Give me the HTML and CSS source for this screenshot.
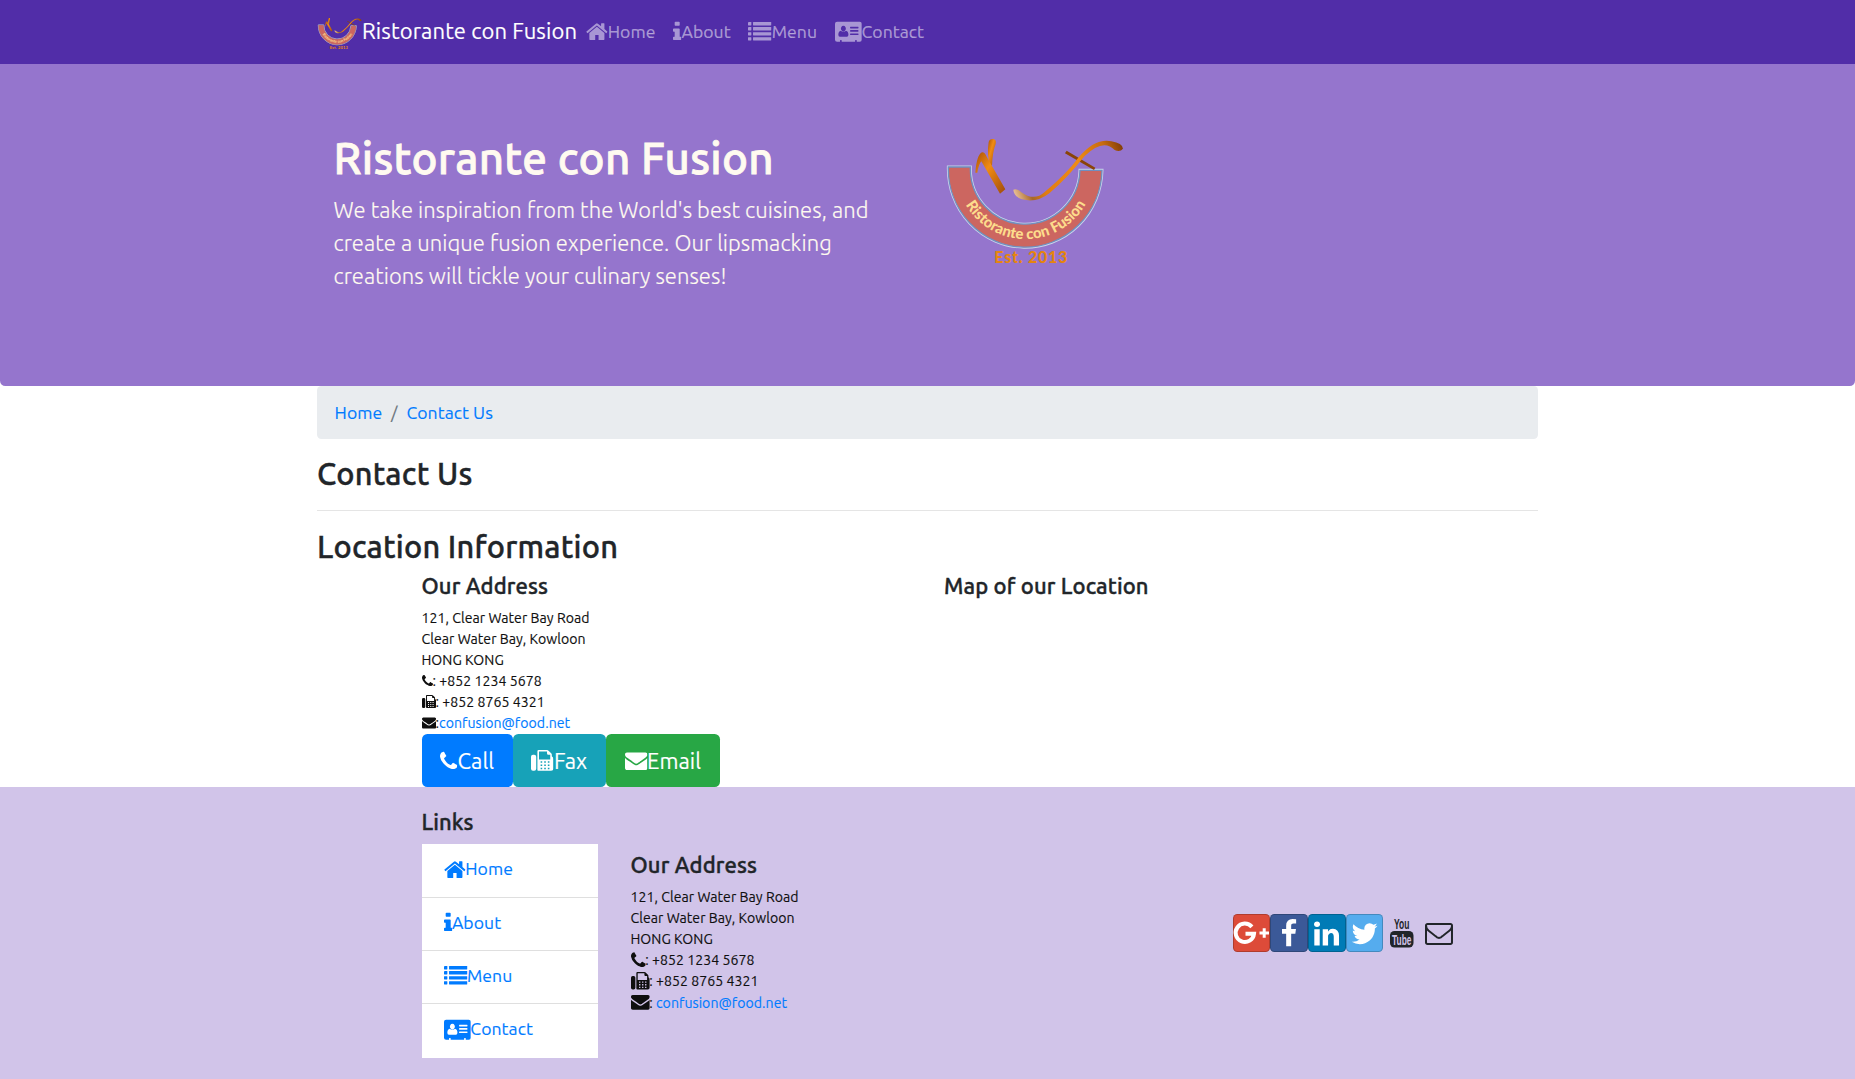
FILE: index.html
```html
<!DOCTYPE html>
<html lang="en">
<head>
<meta charset="utf-8">
<title>Ristorante con Fusion: Contact Us</title>
<link rel="stylesheet" href="styles.css">
</head>
<body>
<svg class="defs" aria-hidden="true">
  <defs>
    <linearGradient id="gold" x1="0" y1="0" x2="1" y2="1"><stop offset="0" stop-color="#a85008"/><stop offset=".4" stop-color="#f08c14"/><stop offset="1" stop-color="#a04c0a"/></linearGradient>
    <linearGradient id="stick" gradientUnits="userSpaceOnUse" x1="280" y1="220" x2="610" y2="80"><stop offset="0" stop-color="#ecc49c"/><stop offset=".13" stop-color="#a86828"/><stop offset=".25" stop-color="#e07c10"/><stop offset=".6" stop-color="#f08c14"/><stop offset=".85" stop-color="#c86c10"/><stop offset="1" stop-color="#803c08"/></linearGradient>
    <path id="arc" d="M137 254A208 208 0 0 0 506 236"/>
  </defs>
  <symbol id="logo" viewBox="72 45 540 400">
    <path d="M85 141H151A163 165 0 0 0 480 151H546A229 234 0 0 1 85 141Z" fill="#cc6660" stroke="#c9d3ea" stroke-width="9"/>
    <path d="M85 141H151A163 165 0 0 0 480 151H546A229 234 0 0 1 85 141Z" fill="#cc6660" stroke="#6f8fc0" stroke-width="4"/>
    <text class="logo-name"><textPath href="#arc" textLength="436" lengthAdjust="spacingAndGlyphs">Ristorante con Fusion</textPath></text>
    <text class="logo-est" x="223" y="428" textLength="219">Est. 2013</text>
    <path d="M206 66Q208 56 220 57Q230 58 227 72Q218 94 216 136L210 138Q200 104 206 66Z" fill="url(#gold)"/>
    <path d="M166 158Q170 104 186 97Q194 96 200 110L256 208L240 221L184 124Q176 132 172 158Z" fill="url(#gold)"/>
    <path d="M440 92L526 143L522 150L435 100Z" fill="#8a4408"/>
    <path d="M280 209Q290 204 306 218Q344 244 374 216Q440 162 476 112Q526 54 574 64Q608 70 609 86Q600 98 584 90Q550 54 494 108Q440 176 388 220Q350 250 306 238Q282 230 280 209Z" fill="url(#stick)"/>
  </symbol>
  <symbol id="home" viewBox="0 0 1664 1792"><path transform="translate(-64)" d="M1472 992v480q0 26-19 45t-45 19h-384v-384h-256v384h-384q-26 0-45-19t-19-45v-480q0-1 .5-3t.5-3l575-474 575 474q1 2 1 6zm223-69l-62 74q-8 9-21 11h-3q-13 0-21-7l-692-577-692 577q-12 8-24 7-13-2-21-11l-62-74q-8-10-7-23.5t11-21.5l719-599q32-26 76-26t76 26l244 204v-195q0-14 9-23t23-9h192q14 0 23 9t9 23v408l219 182q10 8 11 21.5t-7 23.5z"/></symbol>
  <symbol id="info" viewBox="576 0 640 1792"><path d="M1216 1344v128q0 26-19 45t-45 19h-512q-26 0-45-19t-19-45v-128q0-26 19-45t45-19h64v-384h-64q-26 0-45-19t-19-45v-128q0-26 19-45t45-19h384q26 0 45 19t19 45v576h64q26 0 45 19t19 45zm-128-1152v192q0 26-19 45t-45 19h-256q-26 0-45-19t-19-45v-192q0-26 19-45t45-19h256q26 0 45 19t19 45z"/></symbol>
  <symbol id="list" viewBox="0 0 1792 1792"><rect y="160" width="256" height="256" rx="32"/><rect y="544" width="256" height="256" rx="32"/><rect y="928" width="256" height="256" rx="32"/><rect y="1312" width="256" height="256" rx="32"/><rect x="384" y="160" width="1408" height="256" rx="32"/><rect x="384" y="544" width="1408" height="256" rx="32"/><rect x="384" y="928" width="1408" height="256" rx="32"/><rect x="384" y="1312" width="1408" height="256" rx="32"/></symbol>
  <symbol id="card" viewBox="0 0 2048 1792"><path fill-rule="evenodd" d="M160 128H1888A160 160 0 0 1 2048 288V1504A160 160 0 0 1 1888 1664H1664V1568Q1664 1536 1632 1536H1568Q1536 1536 1536 1568V1664H512V1568Q512 1536 480 1536H416Q384 1536 384 1568V1664H160A160 160 0 0 1 0 1504V288A160 160 0 0 1 160 128ZM640 448A190 215 0 1 0 641 448ZM440 820Q256 860 256 1130Q256 1280 370 1280H910Q1024 1280 1024 1130Q1024 860 840 820Q760 896 640 896T440 820ZM1184 512H1760Q1792 512 1792 544V608Q1792 640 1760 640H1184Q1152 640 1152 608V544Q1152 512 1184 512ZM1184 768H1760Q1792 768 1792 800V864Q1792 896 1760 896H1184Q1152 896 1152 864V800Q1152 768 1184 768ZM1184 1024H1760Q1792 1024 1792 1056V1120Q1792 1152 1760 1152H1184Q1152 1152 1152 1120V1056Q1152 1024 1184 1024Z"/></symbol>
  <symbol id="phone" viewBox="192 0 1408 1792"><path d="M1600 1240q0 27-10 70.500t-21 68.500q-21 50-122 106-94 51-186 51-27 0-53-3.500t-57.500-12.500-47-14.500-55.500-20.500-49-18q-98-35-175-83-127-79-264-216t-216-264q-48-77-83-175-3-9-18-49t-20.500-55.500-14.500-47-12.500-57.500-3.500-53q0-92 51-186 56-101 106-122 25-11 68.500-21t70.500-10q14 0 21 3 18 6 53 76 11 19 30 54t35 63.500 31 53.500q3 4 17.500 25t21.500 35.500 7 28.500q0 20-28.500 50t-62 55-62 53-28.500 46q0 9 5 22.500t8.500 20.500 14 24 11.500 19q76 137 174 235t235 174q2 1 19 11.500t24 14 20.500 8.500 22.500 5q18 0 46-28.500t53-62 55-62 50-28.500q14 0 28.500 7t35.500 21.500 25 17.500q25 15 53.500 31t63.500 35 54 30q70 35 76 53 3 7 3 21z"/></symbol>
  <symbol id="fax" viewBox="0 0 1792 1792"><path fill-rule="evenodd" d="M160 384H256A160 160 0 0 1 416 544V1504A160 160 0 0 1 256 1664H160A160 160 0 0 1 0 1504V544A160 160 0 0 1 160 384ZM1664 506Q1792 580 1792 736V1472A192 192 0 0 1 1600 1664H608Q512 1664 512 1568V96Q512 0 608 0H1280Q1350 0 1400 50L1614 264Q1664 314 1664 384ZM640 128V768H1536V384H1376Q1280 384 1280 288V128ZM768 896H896V1024H768ZM1056 896H1184V1024H1056ZM1344 896H1472V1024H1344ZM768 1152H896V1280H768ZM1056 1152H1184V1280H1056ZM1344 1152H1472V1280H1344ZM768 1408H896V1536H768ZM1056 1408H1184V1536H1056ZM1344 1408H1472V1536H1344Z"/></symbol>
  <symbol id="mail" viewBox="0 0 1792 1792"><path transform="translate(0 -64)" d="M1792 710v794q0 66-47 113t-113 47h-1472q-66 0-113-47t-47-113v-794q44 49 101 87 362 246 497 345 57 42 92.500 65.500t94.500 48 110 24.500h2q51 0 110-24.500t94.500-48 92.500-65.500q170-123 498-345 57-39 100-87zm0-294q0 79-49 151t-122 123q-376 261-468 325-10 7-42.500 31t-54 38.500-52 32.500-57.500 27-50 9h-2q-23 0-50-9t-57.500-27-52-32.500-54-38.500-42.500-31q-91-64-262-182.500t-205-142.500q-62-42-117-115.500t-55-136.500q0-78 41.500-130t118.500-52h1472q65 0 112.500 47t47.500 113z"/></symbol>
  <symbol id="mail-o" viewBox="0 0 1792 1792"><path d="M1664 1504v-768q-32 36-69 66-268 206-426 338-51 43-83 67t-86.500 48.500-102.500 24.500h-2q-48 0-102.500-24.500t-86.500-48.500-83-67q-158-132-426-338-37-30-69-66v768q0 13 9.500 22.500t22.500 9.500h1472q13 0 22.500-9.500t9.500-22.500zm0-1051v-24.500l-.5-13-3-12.500-5.500-9-9-7.500-14-2.500h-1472q-13 0-22.500 9.500t-9.500 22.500q0 168 147 284 193 152 401 317 6 5 35 29.500t46 37.500 44.500 31.500 50.500 27.500 43 9h2q20 0 43-9t50.500-27.500 44.500-31.500 46-37.500 35-29.500q208-165 401-317 54-43 100.500-115.500t46.500-131.500zm128-37v1088q0 66-47 113t-113 47h-1472q-66 0-113-47t-47-113v-1088q0-66 47-113t113-47h1472q66 0 113 47t47 113z"/></symbol>
  <symbol id="facebook" viewBox="479 0 1024 1792"><path d="M1343 12v264h-157q-86 0-116 36t-30 108v189h293l-39 296h-254v759h-306v-759h-255v-296h255v-218q0-186 104-288.500t277-102.500q147 0 228 12z"/></symbol>
  <symbol id="linkedin" viewBox="128 0 1536 1792"><path d="M477 625v991h-330v-991h330zm21-306q1 73-50.500 122t-135.500 49h-2q-82 0-132-49t-50-122q0-74 51.500-122.500t134.500-48.500 133 48.500 51 122.500zm1166 729v568h-329v-530q0-105-40.500-164.500t-126.500-59.500q-63 0-105.500 34.500t-63.500 85.500q-11 30-11 81v553h-329q2-399 2-647t-1-296l-1-48h329v144h-2q20-32 41-56t56.500-52 87-43.500 114.500-15.500q171 0 275 113.500t104 332.500z"/></symbol>
  <symbol id="twitter" viewBox="64 0 1664 1792"><path d="M1684 408q-67 98-162 167 1 14 1 42 0 130-38 259.500t-115.500 248.500-184.500 210.500-258 146-323 54.500q-271 0-496-145 35 4 78 4 225 0 401-138-105-2-188-64.500t-114-159.500q33 5 61 5 43 0 85-11-112-23-185.500-111.500t-73.500-205.500v-4q68 38 146 41-66-44-105-115t-39-154q0-88 44-163 121 149 294.500 238.500t371.500 99.500q-8-38-8-74 0-134 94.500-228.500t228.500-94.500q140 0 236 102 109-21 205-78-37 115-142 178 93-10 186-50z"/></symbol>
</svg>

<nav class="navbar">
  <div class="container navbar-inner">
    <a class="brand" href="#"><svg class="brand-logo"><use href="#logo"/></svg>Ristorante con Fusion</a>
    <a class="nav-link" href="#"><svg class="fa w-home"><use href="#home"/></svg>Home</a>
    <a class="nav-link" href="#"><svg class="fa w-info"><use href="#info"/></svg>About</a>
    <a class="nav-link" href="#"><svg class="fa"><use href="#list"/></svg>Menu</a>
    <a class="nav-link" href="#"><svg class="fa w-card"><use href="#card"/></svg>Contact</a>
  </div>
</nav>

<header class="jumbotron">
  <div class="container hero">
    <div class="hero-text">
      <h1>Ristorante con Fusion</h1>
      <p>We take inspiration from the World's best cuisines, and create a unique fusion experience. Our lipsmacking creations will tickle your culinary senses!</p>
    </div>
    <svg class="hero-logo"><use href="#logo"/></svg>
  </div>
</header>

<main class="container">
  <ol class="breadcrumb"><li><a href="#">Home</a></li><li><a href="#">Contact Us</a></li></ol>
  <h3 class="page-title">Contact Us</h3>
  <hr>
  <h3 class="section-title">Location Information</h3>
  <div class="location">
    <section>
      <h5>Our Address</h5>
      <address>
        121, Clear Water Bay Road<br>
        Clear Water Bay, Kowloon<br>
        HONG KONG<br>
        <svg class="fa w-phone"><use href="#phone"/></svg>: +852 1234 5678<br>
        <svg class="fa"><use href="#fax"/></svg>: +852 8765 4321<br>
        <svg class="fa"><use href="#mail"/></svg>:<a href="#">confusion@food.net</a>
      </address>
      <div class="buttons">
        <a class="btn call" href="#"><svg class="fa w-phone"><use href="#phone"/></svg>Call</a>
        <a class="btn fax" href="#"><svg class="fa"><use href="#fax"/></svg>Fax</a>
        <a class="btn email" href="#"><svg class="fa"><use href="#mail"/></svg>Email</a>
      </div>
    </section>
    <section><h5>Map of our Location</h5></section>
  </div>
</main>

<footer>
  <div class="container footer-row">
    <section class="links">
      <h5>Links</h5>
      <ul>
        <li><a href="#"><svg class="fa w-home"><use href="#home"/></svg>Home</a></li>
        <li><a href="#"><svg class="fa w-info"><use href="#info"/></svg>About</a></li>
        <li><a href="#"><svg class="fa"><use href="#list"/></svg>Menu</a></li>
        <li><a href="#"><svg class="fa w-card"><use href="#card"/></svg>Contact</a></li>
      </ul>
    </section>
    <section class="footer-address">
      <h5>Our Address</h5>
      <address class="large-icons">
        121, Clear Water Bay Road<br>
        Clear Water Bay, Kowloon<br>
        HONG KONG<br>
        <svg class="fa w-phone"><use href="#phone"/></svg>: +852 1234 5678<br>
        <svg class="fa"><use href="#fax"/></svg>: +852 8765 4321<br>
        <svg class="fa"><use href="#mail"/></svg>: <a href="#">confusion@food.net</a>
      </address>
    </section>
    <div class="social">
      <a class="tile google" href="#"><svg viewBox="0 0 38 38"><path d="M19.900 12.900A9.200 9.200 0 1 0 22 19.800H13.500" fill="none" stroke="#fff" stroke-width="4"/><path d="M27.500 19H37M32.200 14.300V23.800" fill="none" stroke="#fff" stroke-width="3"/></svg></a>
      <a class="tile facebook" href="#"><svg class="fa w-fb"><use href="#facebook"/></svg></a>
      <a class="tile linkedin" href="#"><svg class="fa w-in"><use href="#linkedin"/></svg></a>
      <a class="tile twitter" href="#"><svg class="fa w-tw"><use href="#twitter"/></svg></a>
      <a class="plain youtube" href="#"><svg viewBox="0 0 24 30"><rect y="13" width="23.500" height="16.500" rx="4.500" fill="#212529"/><g class="tube"><text x="4" y="11" textLength="15.500" lengthAdjust="spacingAndGlyphs">You</text><text class="cut" x="2" y="26.500" textLength="19.500" lengthAdjust="spacingAndGlyphs">Tube</text></g></svg></a>
      <a class="plain" href="#"><svg class="fa"><use href="#mail-o"/></svg></a>
    </div>
  </div>
</footer>
</body>
</html>
```
FILE: styles.css
```css
* { box-sizing: border-box; }
html { font-size: 17.6px; }
body { margin: 0; font: 400 1rem/1.5 Ubuntu, "Noto Sans", sans-serif; letter-spacing: .06px; color: #212529; background: #fff; overflow: hidden; -webkit-text-stroke: .15px; }
a { color: #007bff; text-decoration: none; }
h1, h3, h5 { margin: 0 0 .5rem; font-weight: 500; line-height: 1.2; letter-spacing: .13px; -webkit-text-stroke: .4px; }
h3 { font-size: 1.75rem; letter-spacing: .22px; }
h5 { font-size: 1.25rem; }
.defs { position: absolute; width: 0; height: 0; }
.container { width: 1221px; margin: 0 auto; }

.fa { display: inline-block; width: 1.3333em; height: 1.3333em; vertical-align: -.334em; fill: currentColor; overflow: visible; }
.w-home { width: 1.238em; }
.w-info { width: .476em; }
.w-card { width: 1.524em; }
.w-phone { width: 1.0476em; }

.logo-name { font: 900 45px Lato, sans-serif; fill: #fddc8c; }
.logo-est { font: 900 48px Lato, sans-serif; fill: #e5850f; }

.navbar { height: 64px; background: #512da8; }
.navbar-inner { display: flex; align-items: center; height: 64px; }
.brand { display: flex; align-items: center; height: 33px; margin-top: -3px; color: #fff; font-size: 1.25rem; letter-spacing: .11px; }
.brand-logo { width: 45px; height: 33px; margin-top: 6px; }
.nav-link { padding: 0 .5rem; color: rgba(255, 255, 255, .5); white-space: nowrap; }

.jumbotron { height: 322px; padding: 68px 0; background: #9575cd; color: #fffaf0; border-radius: 0 0 5.3px 5.3px; }
.hero { display: flex; padding-left: 16.5px; }
.hero-text { width: 610.5px; padding-right: 33px; }
.hero h1 { font-size: 2.5rem; margin-bottom: 8px; letter-spacing: .27px; -webkit-text-stroke: .8px; }
.hero p { margin: 0; font-size: 1.25rem; font-weight: 300; }
.hero-logo { width: 180px; height: 133.3px; margin-top: 3.4px; }

.breadcrumb { display: flex; margin: 0 0 16.6px; padding: 13.8px 1rem; height: 53px; list-style: none; background: #e9ecef; border-radius: 4.4px; }
.breadcrumb li + li::before { content: "/"; color: #6c757d; padding: 0 .5rem; }
.page-title { margin-bottom: 9.8px; }
.section-title { margin-bottom: 6.5px; }
hr { height: 1px; margin: 17.5px 0 18px; border: 0; background: #e5e5e5; }
.location { display: flex; padding-left: 104.5px; }
.location section { width: 522.5px; }
address { font-style: normal; font-size: 80%; line-height: 21.1px; color: #0f0f0f; letter-spacing: .05px; }
address .fa { width: 1em; height: 1em; vertical-align: -.143em; }
address .w-phone { width: .786em; }
.large-icons .fa { width: 1.3333em; height: 1.3333em; margin: -4px 0; vertical-align: calc(4px - .334em); }
.large-icons .w-phone { width: 1.0476em; }
.buttons { display: flex; }
.btn { height: 53px; padding: 9.9px 18.7px; color: #fff; font-size: 1.25rem; border-radius: 5.3px; white-space: nowrap; }
.btn .fa { width: 1.02em; height: 1.02em; vertical-align: -.143em; }
.btn .w-phone { width: .786em; }
.call { background: #007bff; }
.fax { background: #17a2b8; }
.email { background: #28a745; }

footer { height: 294px; padding-top: 22px; background: #d1c4e9; }
.footer-row { display: flex; padding-left: 104.5px; }
.links { width: 209px; }
.links ul { width: 176px; margin: 0; padding: 0; list-style: none; background: #fff; }
.links li { height: 53.3px; padding: 12px 22px; border-bottom: 1px solid #dfdfdf; }
.links li:last-child { border: 0; }
.footer-address { width: 602px; padding-top: 42.6px; }
.social { display: flex; align-items: center; height: 38px; margin-top: 105px; }
.tile { display: flex; justify-content: center; align-items: center; width: 37.7px; height: 38px; color: #fff; border: 1px solid rgba(0, 0, 0, .2); border-radius: 4.4px; font-size: 22px; }
.google { background: #dd4b39; }
.google svg { width: 38px; height: 38px; flex: none; }
.facebook { background: #3b5998; }
.linkedin { background: #007bb6; }
.twitter { background: #55acee; }
.w-fb { width: .762em; margin-left: 2px; }
.w-in { width: 1.143em; }
.w-tw { width: 1.238em; }
.plain { display: flex; color: #212529; margin-left: 7px; font-size: 21px; }
.youtube svg { width: 24px; height: 30px; }
.plain + .plain { margin-left: 11px; }
.tube { font: 700 14px "Liberation Sans", sans-serif; fill: #212529; -webkit-text-stroke: 0; }
.cut { fill: #d1c4e9; }
```
